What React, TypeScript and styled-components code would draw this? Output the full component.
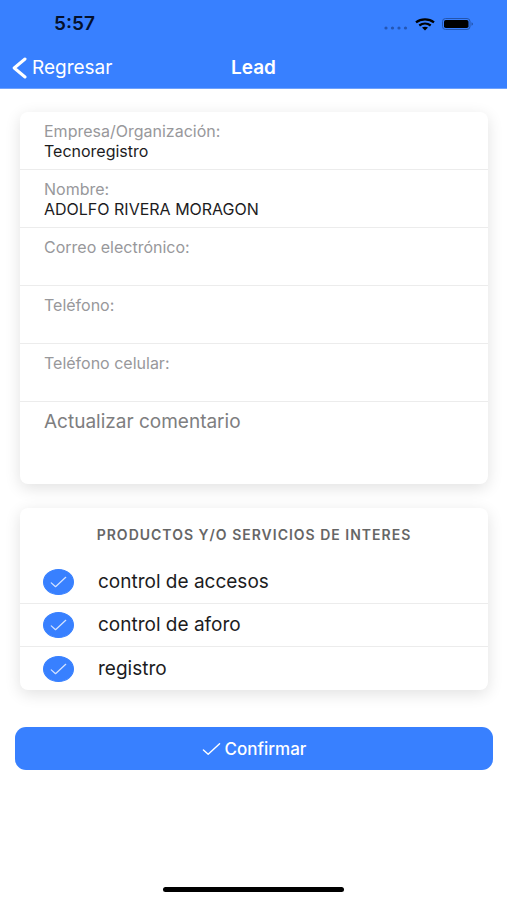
import React from "react";
import styled, { createGlobalStyle } from "styled-components";

const BLUE = "#3880ff";

const GlobalStyle = createGlobalStyle`
  *, *::before, *::after { box-sizing: border-box; }
  body {
    margin: 0;
    background: #fff;
    color: #1c1c1e;
    font-family: Inter, "Liberation Sans", sans-serif;
  }
  input, textarea, button { font: inherit; }
`;

const Screen = styled.div`
  display: flex;
  flex-direction: column;
  min-height: 100vh;
`;

const TopBar = styled.header`
  background: ${BLUE};
  border-bottom: 1px solid #6fa2fd;
`;

const StatusBar = styled.div`
  display: flex;
  align-items: center;
  justify-content: space-between;
  height: 48px;
  padding: 0 33px 0 54px;
  color: #04102b;
`;

const Clock = styled.span`
  font-size: 19px;
  line-height: 24px;
  font-weight: 600;
`;

const StatusIcons = styled.div`
  display: flex;
  align-items: center;
  gap: 7px;
`;

const NavBar = styled.nav`
  display: grid;
  grid-template-columns: 1fr auto 1fr;
  align-items: center;
  height: 40px;
  padding: 0 12px;
  color: #fff;
`;

const BackButton = styled.button`
  display: flex;
  align-items: center;
  gap: 5px;
  justify-self: start;
  padding: 0;
  border: 0;
  background: none;
  color: #fff;
  font-size: 19px;
  line-height: 24px;
  cursor: pointer;
`;

const Title = styled.h1`
  margin: 0;
  font-size: 19px;
  line-height: 24px;
  font-weight: 600;
`;

const Form = styled.form`
  display: flex;
  flex-direction: column;
  flex: 1;
  padding: 23px 14px 0 15px;
`;

const Card = styled.section`
  margin: 0 5px 24px;
  border-radius: 8px;
  background: #fff;
  box-shadow: 0 4px 16px rgba(0, 0, 0, 0.12);
  overflow: hidden;
`;

const Field = styled.label`
  display: block;
  height: 58px;
  padding: 9px 24px 7px;
  border-bottom: 1px solid #ececec;
`;

const FieldLabel = styled.span`
  display: block;
  color: #98989b;
  font-size: 16px;
  line-height: 20px;
`;

const FieldInput = styled.input`
  display: block;
  width: 100%;
  height: 20px;
  padding: 0;
  border: 0;
  outline: 0;
  background: none;
  color: #1c1c1e;
  font-size: 16px;
  line-height: 20px;
`;

const Comment = styled.textarea`
  display: block;
  width: 100%;
  height: 82px;
  padding: 8px 24px;
  border: 0;
  outline: 0;
  resize: none;
  background: none;
  font-size: 19px;
  line-height: 24px;
  &::placeholder { color: #7e7e80; opacity: 1; }
`;

const SectionTitle = styled.h2`
  margin: 0;
  padding: 16px 24px;
  color: #666;
  font-size: 14px;
  line-height: 21px;
  font-weight: 600;
  letter-spacing: 1px;
  text-align: center;
  text-transform: uppercase;
`;

const Option = styled.label`
  display: flex;
  align-items: center;
  gap: 24px;
  height: 43px;
  padding: 0 23px;
  border-bottom: 1px solid #ececec;
  font-size: 19px;
  line-height: 24px;
  cursor: pointer;
  &:last-child { border-bottom: 0; }
`;

const Tick = styled.span`
  display: grid;
  place-items: center;
  > * { grid-area: 1 / 1; }
  svg { pointer-events: none; }
`;

const TickInput = styled.input`
  appearance: none;
  width: 31px;
  height: 26px;
  margin: 0;
  border: 1px solid #c8c7cc;
  border-radius: 50%;
  &:checked { border-color: ${BLUE}; background: ${BLUE}; }
`;

const ConfirmButton = styled.button`
  display: flex;
  align-items: center;
  justify-content: center;
  gap: 4px;
  margin-top: 13px;
  height: 43px;
  border: 0;
  border-radius: 11px;
  background: ${BLUE};
  color: #fff;
  font-size: 17px;
  line-height: 24px;
  font-weight: 500;
  cursor: pointer;
`;

const HomeArea = styled.footer`
  display: flex;
  justify-content: center;
  padding: 8px;
`;

const HomeIndicator = styled.div`
  width: 37%;
  height: 5px;
  border-radius: 3px;
  background: #000;
`;

const SignalDots = () => (
  <svg width="24" height="12" viewBox="0 0 24 12" fill="#2456b4" aria-hidden="true">
    {[2, 8.5, 15, 21.5].map((x) => (
      <circle key={x} cx={x} cy="10" r="1.6" />
    ))}
  </svg>
);

const Wifi = () => (
  <svg width="20" height="13" viewBox="0 0 20 13" fill="none" stroke="#000" strokeWidth="2.3" aria-hidden="true">
    <path d="M1 4.4C6 .4 14 .4 19 4.4" />
    <path d="M4.3 7.5c3.4-2.6 8-2.6 11.4 0" />
    <path d="M7 9.6c1.8-1.2 4.2-1.2 6 0L10 12.4z" fill="#000" stroke="none" />
  </svg>
);

const Battery = () => (
  <svg width="32" height="12" viewBox="0 0 32 12" aria-hidden="true">
    <rect x=".5" y=".5" width="27.5" height="11" rx="3" fill="none" stroke="#2354ad" />
    <rect x="2" y="2" width="24.5" height="8" rx="1.8" fill="#000" />
    <path d="M29.5 4.2c2 .6 2 3 0 3.6z" fill="#2354ad" />
  </svg>
);

const Chevron = () => (
  <svg width="15" height="22" viewBox="0 0 15 22" fill="none" stroke="#fff" strokeWidth="3" strokeLinecap="round" strokeLinejoin="round" aria-hidden="true">
    <path d="M13 2 2.2 11 13 20" />
  </svg>
);

const Check = ({ width, height, stroke = "#fff" }: { width: number; height: number; stroke?: string }) => (
  <svg width={width} height={height} viewBox="0 0 20 14" fill="none" stroke={stroke} strokeWidth="1.5" strokeLinecap="round" strokeLinejoin="round" aria-hidden="true">
    <path d="M1.5 8 6.5 12.5 18.5 1.5" />
  </svg>
);

const fields = [
  { id: "empresa", label: "Empresa/Organización:", value: "Tecnoregistro", type: "text" },
  { id: "nombre", label: "Nombre:", value: "ADOLFO RIVERA MORAGON", type: "text" },
  { id: "correo", label: "Correo electrónico:", value: "", type: "email" },
  { id: "telefono", label: "Teléfono:", value: "", type: "tel" },
  { id: "celular", label: "Teléfono celular:", value: "", type: "tel" },
];

const options = ["control de accesos", "control de aforo", "registro"];

export default function App() {
  return (
    <Screen>
      <GlobalStyle />
      <TopBar>
        <StatusBar>
          <Clock>5:57</Clock>
          <StatusIcons>
            <SignalDots />
            <Wifi />
            <Battery />
          </StatusIcons>
        </StatusBar>
        <NavBar>
          <BackButton type="button">
            <Chevron />
            Regresar
          </BackButton>
          <Title>Lead</Title>
        </NavBar>
      </TopBar>
      <Form onSubmit={(e) => e.preventDefault()}>
        <Card>
          {fields.map((f) => (
            <Field key={f.id} htmlFor={f.id}>
              <FieldLabel>{f.label}</FieldLabel>
              <FieldInput id={f.id} type={f.type} defaultValue={f.value} />
            </Field>
          ))}
          <Comment aria-label="Actualizar comentario" placeholder="Actualizar comentario" />
        </Card>
        <Card>
          <SectionTitle>Productos y/o servicios de interes</SectionTitle>
          {options.map((name) => (
            <Option key={name}>
              <Tick>
                <TickInput type="checkbox" defaultChecked />
                <Check width={17} height={12} stroke="#d3e2ff" />
              </Tick>
              {name}
            </Option>
          ))}
        </Card>
        <ConfirmButton type="submit">
          <Check width={19} height={14} />
          Confirmar
        </ConfirmButton>
      </Form>
      <HomeArea>
        <HomeIndicator />
      </HomeArea>
    </Screen>
  );
}
